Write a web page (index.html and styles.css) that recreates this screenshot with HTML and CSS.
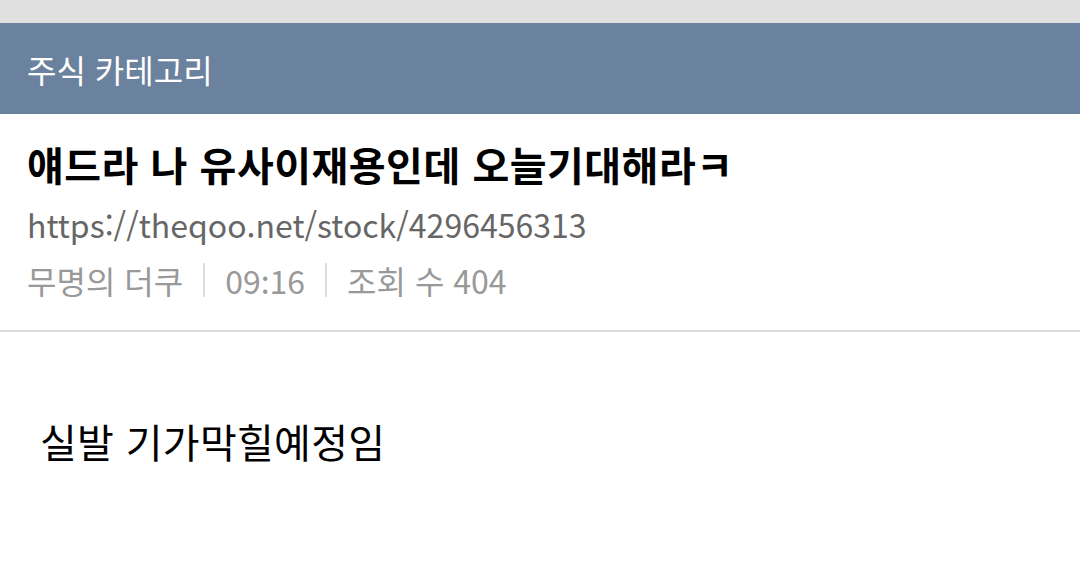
FILE: index.html
```html
<!DOCTYPE html>
<html lang="ko">
<head>
<meta charset="utf-8">
<link rel="stylesheet" href="styles.css">
</head>
<body>
<div class="topbar"></div>
<header class="category">주식 카테고리</header>
<section class="post-head">
  <h1 class="title">얘드라 나 유사이재용인데 오늘기대해라ㅋ</h1>
  <div class="url">https://theqoo.net/stock/4296456313</div>
  <div class="meta">
    <span>무명의 더쿠</span>
    <span class="sep"></span>
    <span class="num" lang="en">09:16</span>
    <span class="sep"></span>
    <span>조회 수 404</span>
  </div>
</section>
<article class="post-body">실발 기가막힐예정임</article>
</body>
</html>
```

FILE: styles.css
```css
html, body {
  margin: 0;
  padding: 0;
  background: #ffffff;
  font-family: "Noto Sans CJK KR", "Noto Sans", sans-serif;
}

.topbar {
  height: 23px;
  background: #e0e0e0;
}

.category {
  height: 91px;
  background: #6b829e;
  color: #ffffff;
  font-size: 32px;
  display: flex;
  align-items: center;
  padding-left: 27px;
}

.post-head {
  padding: 22px 27px 0;
  height: 194px;
  border-bottom: 2px solid #dddddd;
}

.title {
  margin: 0;
  font-size: 40px;
  font-weight: 700;
  letter-spacing: 0.5px;
  color: #000000;
  line-height: 56px;
}

.url {
  margin-top: 4px;
  font-size: 32px;
  color: #666666;
  line-height: 56px;
}

.meta {
  display: flex;
  align-items: center;
  font-size: 32px;
  color: #999999;
  line-height: 56px;
  gap: 20px;
}

.num {
  font-family: "Noto Sans CJK JP", "Noto Sans", sans-serif;
}

.sep {
  width: 2px;
  height: 34px;
  background: #dddddd;
}

.post-body {
  padding: 80px 40px;
  font-size: 40px;
  letter-spacing: 0.3px;
  color: #000000;
}
```
